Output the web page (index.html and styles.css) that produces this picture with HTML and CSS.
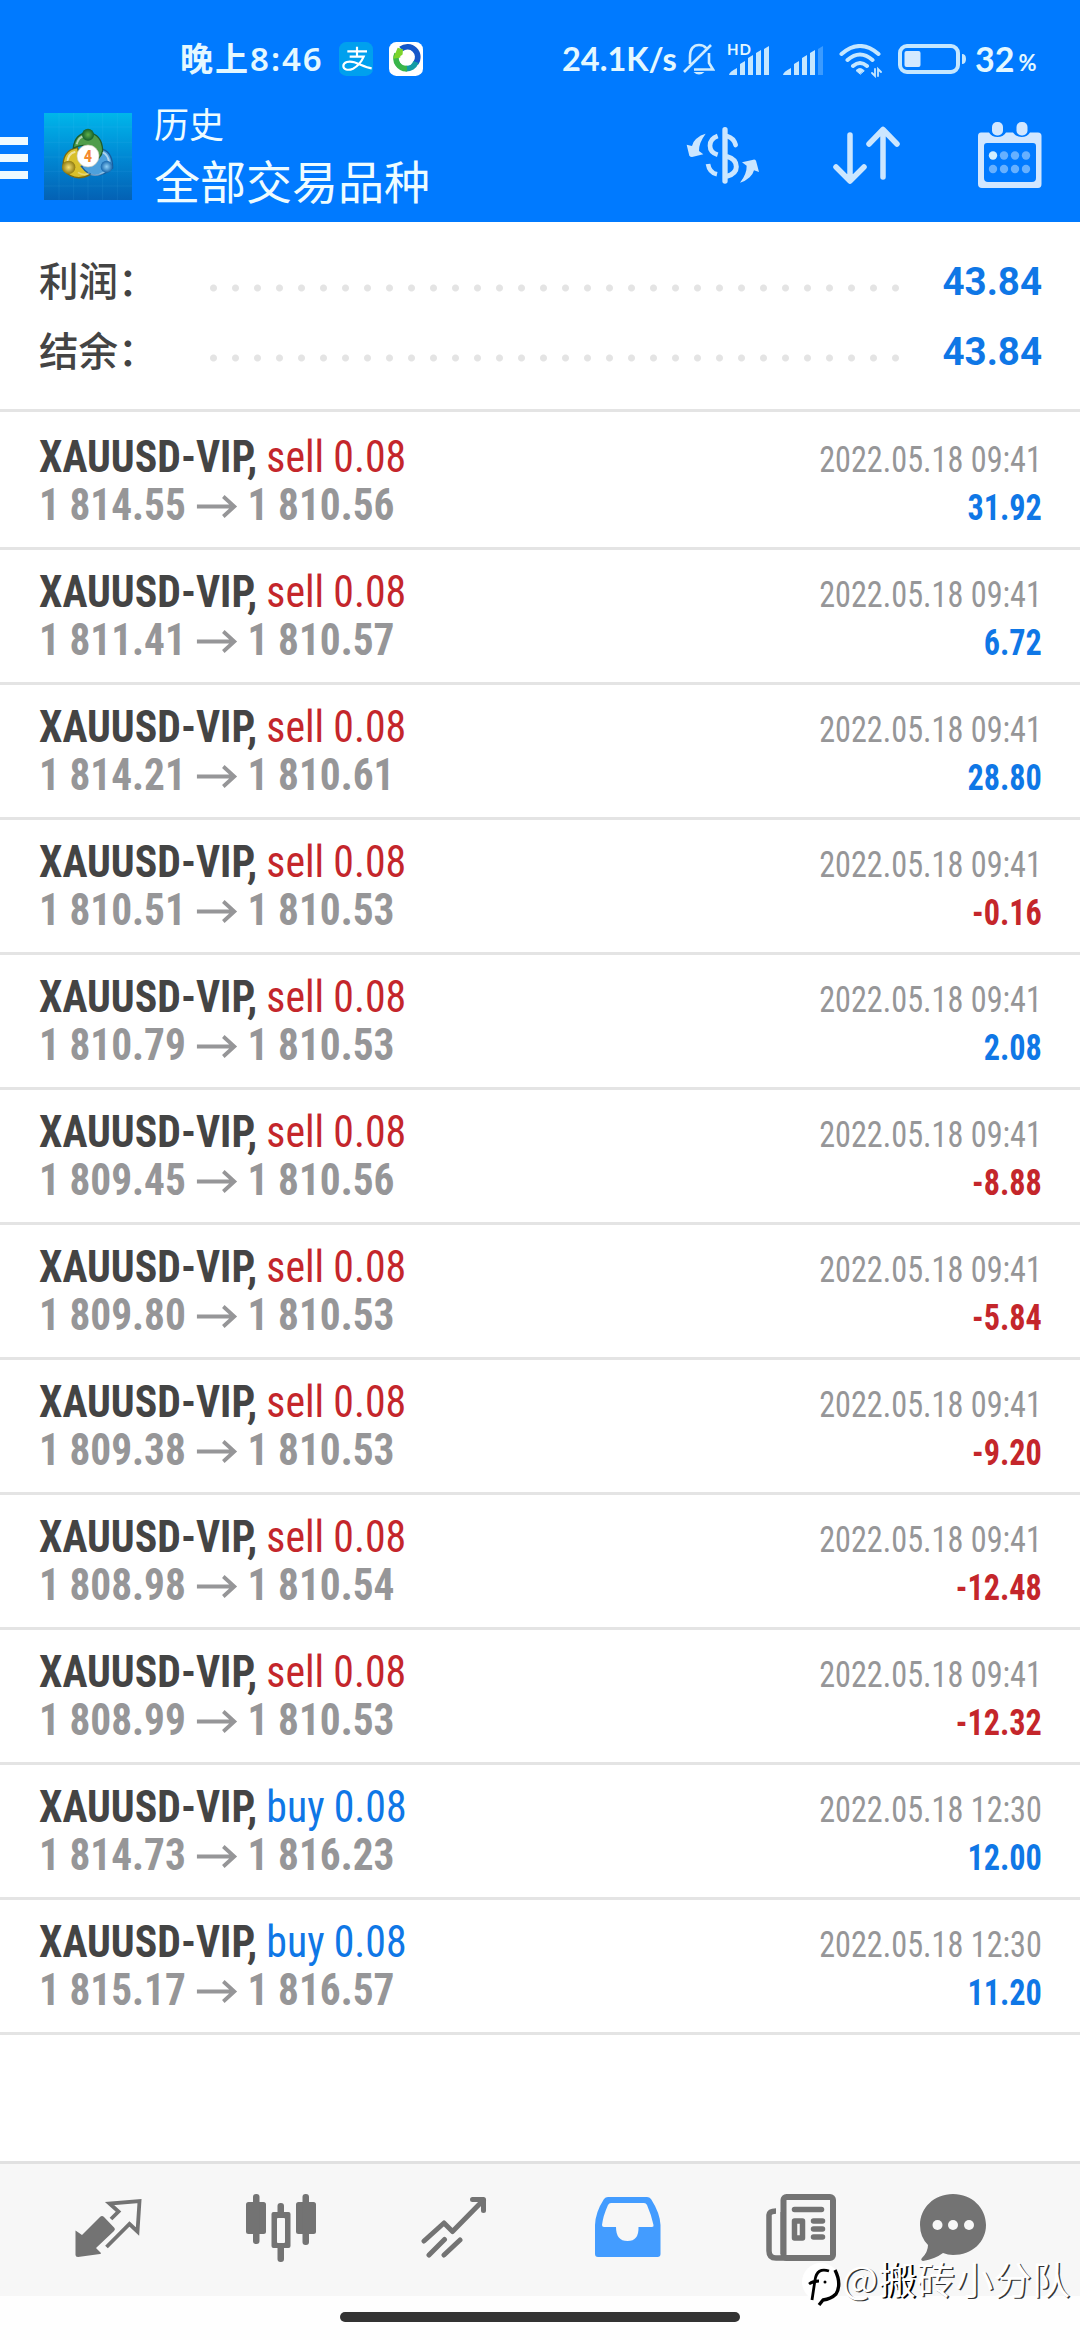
FILE: index.html
```html
<!DOCTYPE html>
<html lang="zh-CN">
<head>
<meta charset="utf-8">
<title>历史</title>
<link rel="stylesheet" href="styles.css">
</head>
<body>
<svg class="defs" width="0" height="0">
  <symbol id="arrow" viewBox="0 0 43 24"><path d="M0 12.5H40M28 2.5L39.5 12.5L28 22.5" fill="none" stroke="currentColor" stroke-width="4"/></symbol>
</svg>
<div class="screen">
  <header class="header">
    <div class="status">
      <span class="time">晚上8:46</span>
      <svg class="app-pay" width="34" height="34" viewBox="0 0 102 102"><rect width="102" height="102" rx="22" fill="#00a0ee"/><path d="M25 28H84M54 14V44M32 44H74C68 58 58 72 42 80C26 87 13 82 13 72C13 60 30 56 46 61C62 66 80 76 98 79" fill="none" stroke="#fff" stroke-width="6.5"/></svg>
      <svg class="app-sync" width="34" height="34" viewBox="0 0 102 102"><rect width="102" height="102" rx="22" fill="#fff"/><path d="M36 21A31 31 0 0 1 80 64" fill="none" stroke="#1557c9" stroke-width="17"/><path d="M81 60A31 31 0 0 1 50 80" fill="none" stroke="#149ba5" stroke-width="17"/><path d="M54 80A31 31 0 0 1 24 36" fill="none" stroke="#39b54a" stroke-width="17"/><path d="M26 17L42 22L40 46L12 50Z" fill="#7cd32b"/><path d="M34 42L48 34L66 36L74 54H66V68L54 56L48 68L34 62Z" fill="#fff"/></svg>
      <span class="speed">24.1K/s</span>
      <svg class="bell" width="32" height="32" viewBox="0 0 32 32" fill="none" stroke="#cfecff" stroke-width="2.6"><path d="M7 21V13C7 6 10.500 2 16 2C19 2 21.500 3 23 5M26 10V20L30 26.500H11M1 29L28 2"/><path d="M10.500 29H21.500Q16 34 10.500 29Z" fill="#cfecff" stroke="none"/></svg>
      <div class="hd">
        <span class="hd-label">HD</span>
        <svg width="41" height="30" viewBox="0 0 41 30" fill="#c5e7ff"><path d="M0 29Q0 26 8 22V29ZM11 18L16 15V29H11ZM19 12L24 9V29H19ZM27 7L32 4V29H27ZM35 3L40 0V29H35Z"/></svg>
      </div>
      <svg class="signal" width="41" height="30" viewBox="0 0 41 30" fill="#c5e7ff"><path d="M0 29Q0 26 8 22V29ZM11 18L16 15V29H11ZM19 12L24 9V29H19ZM27 7L32 4V29H27Z"/><path d="M35 3L40 0V29H35Z" opacity=".3"/></svg>
      <svg class="wifi" width="43" height="34" viewBox="0 0 43 34" fill="none" stroke="#c5e7ff" stroke-width="4" stroke-linecap="round"><path d="M2.500 10Q21 -6 39.500 10M8.500 16Q21 5 33.500 16M14 22Q21 16 28 22"/><path d="M21 30L17 26.500Q21 22.500 25 26.500Z" fill="#c5e7ff" stroke-width="1"/><path d="M36 25V32L33 29M39 32V25L42 28" stroke-width="1.800"/></svg>
      <svg class="battery" width="68" height="30" viewBox="0 0 68 30"><rect x="2" y="2" width="58" height="26" rx="7" fill="none" stroke="#c5e7ff" stroke-width="4"/><rect x="6.500" y="7" width="16" height="16" rx="2" fill="#d4e9ff"/><path d="M64 10Q68 10 68 15T64 20Z" fill="#c5e7ff"/></svg>
      <span class="level">32</span><span class="percent">%</span>
    </div>
    <div class="toolbar">
      <div class="menu"><i></i><i></i><i></i></div>
      <svg class="logo" width="88" height="87" viewBox="0 0 264 261">
        <defs>
          <linearGradient id="sky" x2="0" y2="1"><stop offset="0" stop-color="#00b6ea"/><stop offset=".5" stop-color="#0089d4"/><stop offset="1" stop-color="#0461b4"/></linearGradient>
          <radialGradient id="gr"><stop stop-color="#5fb04a"/><stop offset="1" stop-color="#14602b"/></radialGradient>
          <radialGradient id="ye"><stop stop-color="#f4e074"/><stop offset="1" stop-color="#8f7a10"/></radialGradient>
          <radialGradient id="bl"><stop stop-color="#8fd0f7"/><stop offset="1" stop-color="#1767ad"/></radialGradient>
        </defs>
        <rect width="264" height="261" fill="url(#sky)"/>
        <path d="M45 0V261M89 0V261M132 0V261M176 0V261M220 0V261M0 42H264M0 88H264M0 132H264M0 175H264M0 219H264" stroke="#6fd8ff" stroke-opacity=".14" stroke-width="2"/>
        <path d="M58 170Q52 112 100 104Q108 140 140 184Q92 210 58 170Z" fill="#d9c02c" stroke="#7b6910" stroke-width="4"/>
        <path d="M206 165Q206 112 166 106Q160 140 112 160Q150 212 206 165Z" fill="#4da0dc" stroke="#175c9c" stroke-width="4"/>
        <path d="M88 105Q92 62 132 58Q174 64 176 112Q174 126 164 136Q140 80 88 105Z" fill="#4f9d4b" stroke="#1d5c2b" stroke-width="4"/>
        <path d="M70 150Q70 122 94 116M196 150Q192 124 176 118M98 94Q104 72 120 70" fill="none" stroke="#fff" stroke-opacity=".55" stroke-width="6"/>
        <path d="M102 178Q120 190 136 180M140 184Q160 192 182 176" fill="none" stroke="#fff" stroke-opacity=".35" stroke-width="5"/>
        <circle cx="132" cy="65" r="18" fill="url(#gr)"/><circle cx="74" cy="163" r="20" fill="url(#ye)"/><circle cx="188" cy="161" r="18" fill="url(#bl)"/>
        <circle cx="132" cy="129" r="33" fill="#fff" stroke="#c9c9b8" stroke-width="2"/>
        <text class="logo-digit" x="132" y="148" text-anchor="middle">4</text>
      </svg>
      <div class="titles"><span class="section">历史</span><span class="filter">全部交易品种</span></div>
      <svg class="dollar" width="74" height="58" viewBox="46 45 222 174" fill="none" stroke="#cbe6ff"><path d="M163 56V210" stroke-width="16" stroke-linecap="round"/><path d="M170 76Q189 81 195 102" stroke-width="14" stroke-linecap="round"/><path d="M141 75Q118 83 118 104Q118 124 141 131M112 159Q116 185 139 190" stroke-width="14"/><path d="M168 136Q197 144 197 167Q197 188 168 196" stroke-width="15"/><path d="M105 68Q90 71 76 84Q66 93 64 105L48 101L56 134Q59 138 64 138L98 130L85 120Q84 96 105 68Z" fill="#cbe6ff" stroke="none"/><path d="M208 215Q223 212 237 199Q247 190 250 178L265 183L256 149Q253 145 248 146L214 154L228 164Q229 188 208 215Z" fill="#cbe6ff" stroke="none"/></svg>
      <svg class="sort" width="67" height="58" viewBox="0 0 67 58" fill="none" stroke="#cbe6ff" stroke-width="5.500" stroke-linecap="round" stroke-linejoin="round"><path d="M17 9V54M3 41L17 55L31 41M50 51V4M36 18L50 3.500L64 18"/></svg>
      <svg class="calendar" width="64" height="66" viewBox="0 0 64 66"><path fill="#d2e7ff" fill-rule="evenodd" d="M3 10.500H11Q14 15 19.500 15T28 10.500H35Q38 15 43.500 15T52 10.500H60Q63.500 10.500 63.500 14V62Q63.500 66 60 66H4Q0 66 0 62V14Q0 10.500 3 10.500ZM9 21Q6 21 6 24V56Q6 60 10 60H54Q58 60 58 56V24Q58 21 55 21Z"/><rect x="14" width="11" height="13.500" rx="5" fill="#d2e7ff"/><rect x="38.500" width="11" height="13.500" rx="5" fill="#d2e7ff"/><g fill="#66b0ff"><circle cx="15" cy="33.500" r="4.200" fill="#d2eeff"/><circle cx="26" cy="33.500" r="4.200"/><circle cx="37" cy="33.500" r="4.200"/><circle cx="48" cy="33.500" r="4.200"/><circle cx="15" cy="47" r="4.200"/><circle cx="26" cy="47" r="4.200"/><circle cx="37" cy="47" r="4.200"/><circle cx="48" cy="47" r="4.200"/></g></svg>
    </div>
  </header>

  <section class="summary">
    <div class="sum-row"><span class="label">利润：</span><span class="dots"></span><span class="total">43.84</span></div>
    <div class="sum-row"><span class="label">结余：</span><span class="dots"></span><span class="total">43.84</span></div>
  </section>

  <main class="deals">
    <div class="deal"><div class="info"><div class="name"><b>XAUUSD-VIP,</b> <span class="sell">sell 0.08</span></div><div class="prices">1 814.55<svg class="arrow"><use href="#arrow"/></svg>1 810.56</div></div><div class="result"><div class="date">2022.05.18 09:41</div><div class="gain">31.92</div></div></div>
    <div class="deal"><div class="info"><div class="name"><b>XAUUSD-VIP,</b> <span class="sell">sell 0.08</span></div><div class="prices">1 811.41<svg class="arrow"><use href="#arrow"/></svg>1 810.57</div></div><div class="result"><div class="date">2022.05.18 09:41</div><div class="gain">6.72</div></div></div>
    <div class="deal"><div class="info"><div class="name"><b>XAUUSD-VIP,</b> <span class="sell">sell 0.08</span></div><div class="prices">1 814.21<svg class="arrow"><use href="#arrow"/></svg>1 810.61</div></div><div class="result"><div class="date">2022.05.18 09:41</div><div class="gain">28.80</div></div></div>
    <div class="deal"><div class="info"><div class="name"><b>XAUUSD-VIP,</b> <span class="sell">sell 0.08</span></div><div class="prices">1 810.51<svg class="arrow"><use href="#arrow"/></svg>1 810.53</div></div><div class="result"><div class="date">2022.05.18 09:41</div><div class="loss">-0.16</div></div></div>
    <div class="deal"><div class="info"><div class="name"><b>XAUUSD-VIP,</b> <span class="sell">sell 0.08</span></div><div class="prices">1 810.79<svg class="arrow"><use href="#arrow"/></svg>1 810.53</div></div><div class="result"><div class="date">2022.05.18 09:41</div><div class="gain">2.08</div></div></div>
    <div class="deal"><div class="info"><div class="name"><b>XAUUSD-VIP,</b> <span class="sell">sell 0.08</span></div><div class="prices">1 809.45<svg class="arrow"><use href="#arrow"/></svg>1 810.56</div></div><div class="result"><div class="date">2022.05.18 09:41</div><div class="loss">-8.88</div></div></div>
    <div class="deal"><div class="info"><div class="name"><b>XAUUSD-VIP,</b> <span class="sell">sell 0.08</span></div><div class="prices">1 809.80<svg class="arrow"><use href="#arrow"/></svg>1 810.53</div></div><div class="result"><div class="date">2022.05.18 09:41</div><div class="loss">-5.84</div></div></div>
    <div class="deal"><div class="info"><div class="name"><b>XAUUSD-VIP,</b> <span class="sell">sell 0.08</span></div><div class="prices">1 809.38<svg class="arrow"><use href="#arrow"/></svg>1 810.53</div></div><div class="result"><div class="date">2022.05.18 09:41</div><div class="loss">-9.20</div></div></div>
    <div class="deal"><div class="info"><div class="name"><b>XAUUSD-VIP,</b> <span class="sell">sell 0.08</span></div><div class="prices">1 808.98<svg class="arrow"><use href="#arrow"/></svg>1 810.54</div></div><div class="result"><div class="date">2022.05.18 09:41</div><div class="loss">-12.48</div></div></div>
    <div class="deal"><div class="info"><div class="name"><b>XAUUSD-VIP,</b> <span class="sell">sell 0.08</span></div><div class="prices">1 808.99<svg class="arrow"><use href="#arrow"/></svg>1 810.53</div></div><div class="result"><div class="date">2022.05.18 09:41</div><div class="loss">-12.32</div></div></div>
    <div class="deal"><div class="info"><div class="name"><b>XAUUSD-VIP,</b> <span class="buy">buy 0.08</span></div><div class="prices">1 814.73<svg class="arrow"><use href="#arrow"/></svg>1 816.23</div></div><div class="result"><div class="date">2022.05.18 12:30</div><div class="gain">12.00</div></div></div>
    <div class="deal"><div class="info"><div class="name"><b>XAUUSD-VIP,</b> <span class="buy">buy 0.08</span></div><div class="prices">1 815.17<svg class="arrow"><use href="#arrow"/></svg>1 816.57</div></div><div class="result"><div class="date">2022.05.18 12:30</div><div class="gain">11.20</div></div></div>
  </main>

  <nav class="tabs">
    <svg class="quotes" width="68" height="68" viewBox="0 0 68 68" fill="#737373"><path d="M0.500 36.500L7 41L25 23Q27 21 29 23L39.500 34Q40.500 35.500 39 37L21 54L26 59Q26 60 25 60L3 63Q0.500 63 0.500 61Z"/><path d="M36 25L43.500 17.500L34.500 9.500L64.500 7L62.500 37.500L54.500 30L31.500 53" fill="none" stroke="#737373" stroke-width="3.800"/></svg>
    <svg class="charts" width="70" height="68" viewBox="0 0 70 68" fill="#737373"><rect y="8" width="20" height="32" rx="2.500"/><rect x="7" width="6.500" height="50" rx="3"/><rect x="50" y="8" width="20" height="32" rx="2.500"/><rect x="56.500" width="6.500" height="51" rx="3"/><rect x="31.500" y="9" width="6.500" height="14" rx="3"/><rect x="31.500" y="50" width="6.500" height="18" rx="3"/><path fill-rule="evenodd" d="M27.500 18H42.500Q44.500 18 44.500 20V52Q44.500 54 42.500 54H27.500Q25.500 54 25.500 52V20Q25.500 18 27.500 18ZM32 24Q31 24 31 25V48Q31 49 32 49H38Q39 49 39 48V25Q39 24 38 24Z"/></svg>
    <svg class="trade" width="66" height="68" viewBox="0 0 66 68" fill="none" stroke="#737373" stroke-width="5" stroke-linecap="round" stroke-linejoin="round"><path d="M3 47L23 29L31.500 37.500L62.500 6M51.500 5.500H62.500V16.500M8 61L23.500 45.500M23 61L39 46"/></svg>
    <svg class="history" width="67" height="68" viewBox="0 0 67 68"><path fill="#439cff" fill-rule="evenodd" d="M14 3H53Q55.500 3 57 5Q66 19 66.500 31V60Q66.500 63 63.500 63H4Q1 63 1 60V31Q1.500 18 10 5Q11.500 3 14 3ZM17 9Q15 9 14 11Q9 22 8 31Q8 33 10 33H22Q22 47 33.500 47T44.500 33H58Q60 33 59.500 31Q57 20 53 11Q52 9 50 9Z"/></svg>
    <svg class="news" width="70" height="68" viewBox="0 0 70 68" fill="none" stroke="#737373"><rect x="17.500" y="3" width="49.500" height="61" rx="3" stroke-width="6"/><path d="M10 17Q3.500 17 3 21V57Q3 64 10 64H20" stroke-width="5.500"/><path d="M17 18V60" stroke-width="5"/><path d="M28.500 15.500H55.500" stroke-width="5.500" stroke-linecap="round"/><path d="M47.500 27H56.500M47.500 35H56.500M47.500 43H56.500" stroke-width="5.500" stroke-linecap="round"/><rect x="28.500" y="27" width="8" height="17" stroke-width="5.500" stroke-linejoin="round"/></svg>
    <svg class="chat" width="68" height="68" viewBox="0 0 68 68"><path fill="#737373" d="M34 0C53 0 67 14 67 31S53 61 34 61Q29 61 24 59Q16 65 4 67Q1 66 3 64Q9 58 9 51Q1 43 1 31C1 14 15 0 34 0Z"/><g fill="#f7f7f7"><circle cx="18.500" cy="31" r="5"/><circle cx="34" cy="31" r="5"/><circle cx="50" cy="31" r="5"/></g></svg>
  </nav>
  <div class="home"><span class="home-bar"></span></div>

  <div class="watermark">
    <svg width="40" height="46" viewBox="0 0 40 46"><circle cx="19" cy="21" r="19" fill="#fff"/><path d="M27 10Q15 6 13 19L10 39M7 23Q11 20 17 20" fill="none" stroke="#000" stroke-width="2.800"/><path d="M33 9Q40 23 34 33Q29 38 21 39L17 44" fill="none" stroke="#000" stroke-width="3.400"/><circle cx="23" cy="21" r="1.500"/></svg>
    <span>@<b>搬</b>砖小分队</span>
  </div>
</div>
</body>
</html>
```
FILE: styles.css
```css
* { box-sizing: border-box; }
body { margin: 0; background: #fff; font-family: "Roboto Condensed", Roboto, "Noto Sans CJK SC", sans-serif; }
svg { display: block; flex: none; }
.defs { position: absolute; }
.screen { position: relative; width: 1080px; height: 2340px; display: flex; flex-direction: column; overflow: hidden; }

.header { height: 222px; padding-top: 27px; background: #007aff; color: #eefcff; }
.status { height: 64px; padding-left: 180px; display: flex; align-items: center; white-space: nowrap; color: #e4f8ff; font-family: Lato, "Noto Sans CJK SC", sans-serif; font-weight: 700; font-size: 34px; line-height: 64px; }
.time { width: 159px; font-family: "Noto Sans", "Noto Sans CJK SC", sans-serif; font-weight: 600; font-size: 33px; letter-spacing: 2px; }
.app-sync { margin-left: 16px; }
.speed { width: 121px; margin-left: 139px; font-size: 32.5px; }
.hd { width: 43px; height: 34px; margin-left: 12px; position: relative; display: flex; align-items: flex-end; justify-content: flex-end; }
.hd-label { position: absolute; left: 0; top: 0; font-size: 15px; line-height: 15px; letter-spacing: 1px; }
.signal { margin: 4px 0 0 13px; }
.wifi { margin: 4px 0 0 15px; }
.battery { margin-left: 16px; }
.level { margin-left: 9px; font-size: 34px; }
.percent { margin: 7px 0 0 4px; font-size: 22px; }

.toolbar { height: 131px; display: flex; align-items: center; }
.menu { width: 28px; display: flex; flex-direction: column; gap: 9px; padding-top: 2px; }
.menu i { height: 8px; background: #eefaff; }
.logo { margin-left: 16px; }
.logo-digit { font: 700 50px "Roboto Condensed", sans-serif; fill: #f58a2e; }
.titles { width: 280px; margin-left: 22px; padding-bottom: 12px; display: flex; flex-direction: column; line-height: 56px; white-space: nowrap; font-family: "Noto Sans CJK SC", sans-serif; }
.section { font-size: 35px; }
.filter { font-size: 46px; }
.dollar { margin: 0 0 3px 252px; }
.sort { margin: 0 0 3px 73px; }
.calendar { margin: 0 0 3px 78px; }

.summary { height: 190px; padding: 24px 38px 0 39px; border-bottom: 3px solid #e4e4e4; }
.sum-row { height: 70px; display: flex; align-items: center; }
.label { width: 163px; padding-bottom: 4px; font: 500 39.5px/66px "Noto Sans CJK SC", sans-serif; color: #444; white-space: nowrap; }
.dots { width: 704px; height: 8px; margin-top: 14px; background: radial-gradient(circle at 11.5px 4px, #e4e4e4 3px, transparent 4px) 0 0 / 22px 8px; }
.total { flex: 1; padding-top: 1px; text-align: right; font: 700 38.5px/70px Roboto, sans-serif; color: #0f77e6; }

.deals { flex: 1; padding-top: 3px; }
.deal { height: 135px; padding: 18px 38px 0 39px; display: flex; justify-content: space-between; border-bottom: 3px solid #e4e4e4; line-height: 48px; white-space: nowrap; }
.info { font-size: 44px; transform: scaleX(.95); transform-origin: left; }
.name { word-spacing: -.5px; color: #444; }
.prices { padding-top: 1px; display: flex; align-items: center; font-size: 43.5px; font-weight: 700; color: #969698; }
.arrow { width: 43px; height: 24px; margin: 0 11px; }
.result { padding-top: 3px; text-align: right; font-size: 36px; transform: scaleX(.895); transform-origin: right; }
.date { color: #969698; }
.sell { color: #c4262b; }
.buy { color: #0f77e6; }
.gain { font-weight: 700; color: #0f77e6; }
.loss { font-weight: 700; color: #c4262b; }

.tabs { height: 135px; padding: 30px 0 0 75px; display: flex; background: #f7f7f7; border-top: 3px solid #e1e1e1; }
.charts { margin-left: 103px; }
.trade { margin-left: 105px; }
.history { margin-left: 107px; }
.news { margin-left: 105px; }
.chat { margin-left: 83px; }
.home { height: 44px; padding-top: 16px; display: flex; justify-content: center; background: #fefefe; }
.home-bar { width: 400px; height: 10px; border-radius: 5px; background: #333; }

.watermark { position: absolute; left: 802px; top: 2257px; display: flex; align-items: center; color: #fff; font: 38px/42px "Noto Sans CJK SC", sans-serif; text-shadow: 1.5px 1px 0 #333; white-space: nowrap; }
.watermark span { padding-bottom: 11px; letter-spacing: .4px; }
.watermark b { font-weight: 400; text-shadow: 2px 1px 0 #000; }
```
